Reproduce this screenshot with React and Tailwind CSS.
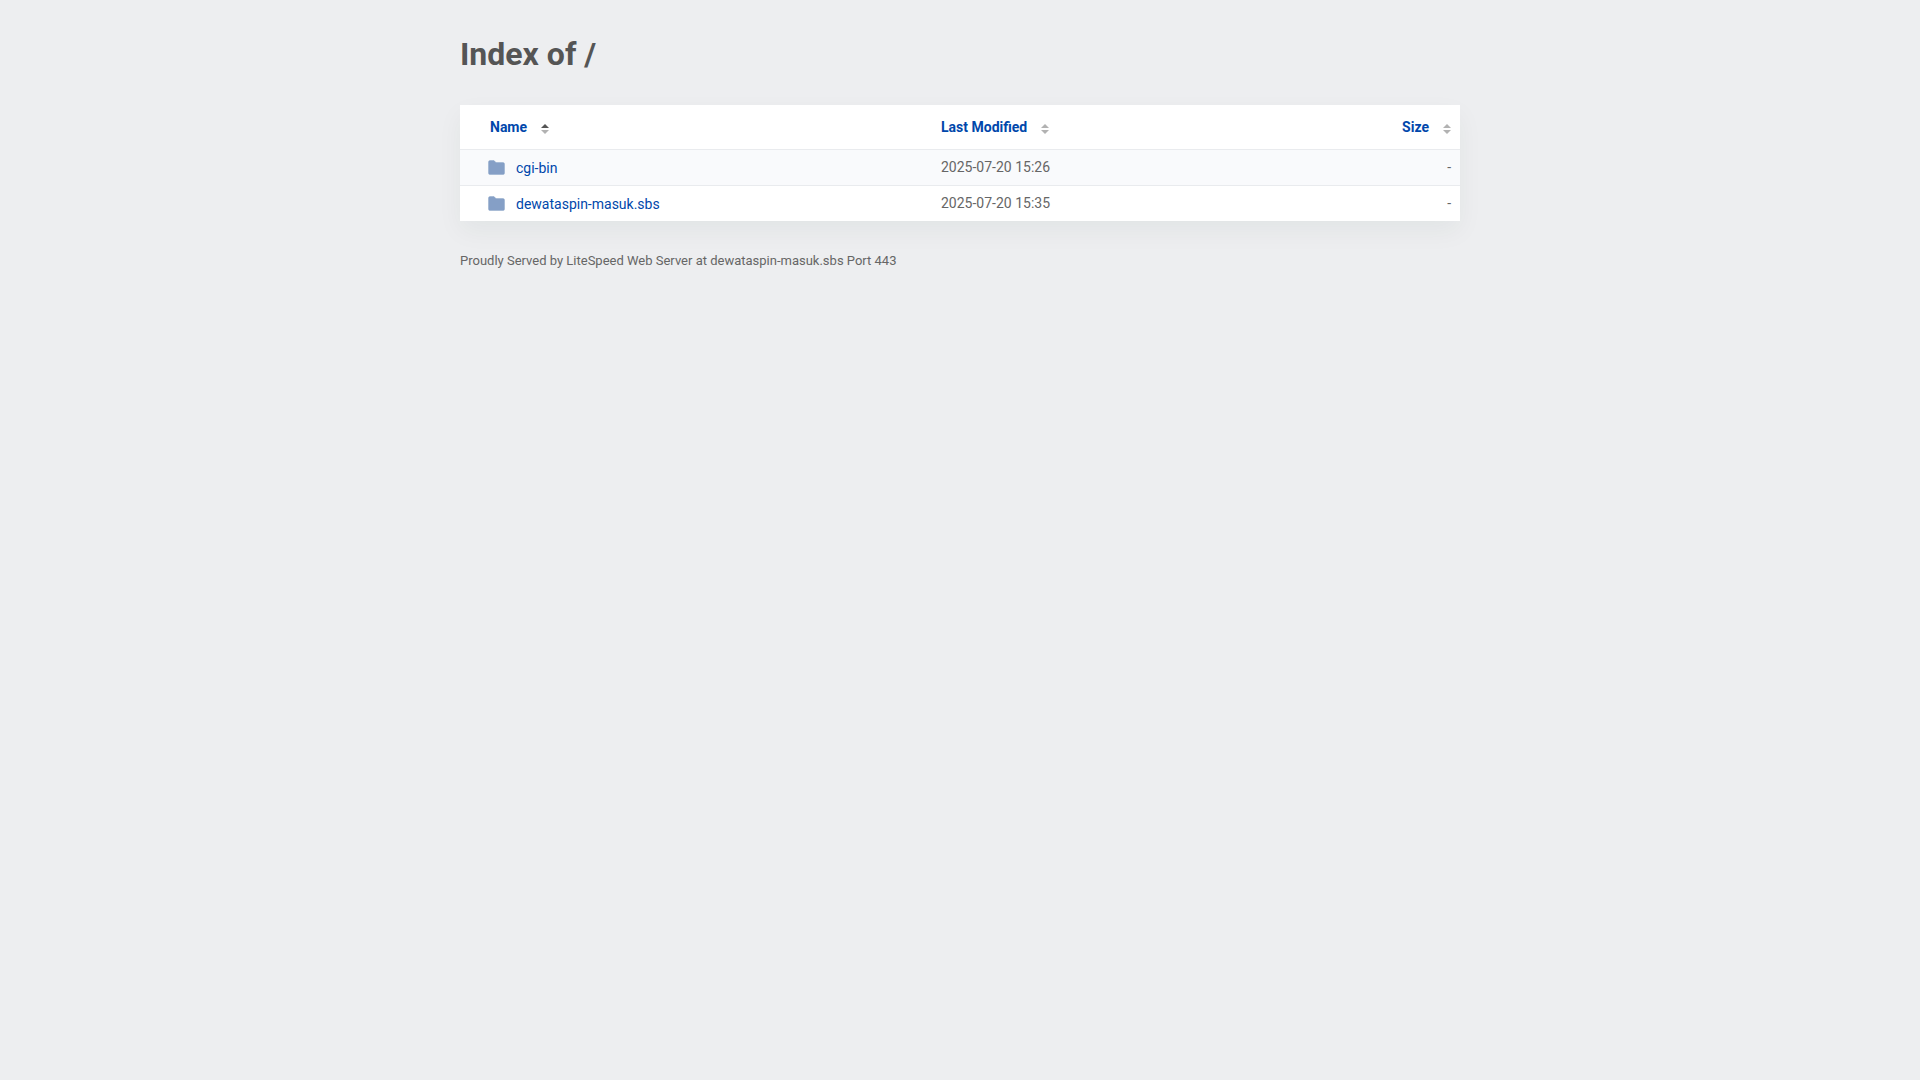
const entries = [
  { name: "cgi-bin", modified: "2025-07-20 15:26", size: "-" },
  { name: "dewataspin-masuk.sbs", modified: "2025-07-20 15:35", size: "-" },
];

function SortIcon({ active }) {
  return (
    <svg aria-hidden="true" viewBox="0 0 8 10" className="mt-1 h-2.5 w-2 shrink-0">
      <path d="M4 0 8 4H0Z" fill={active ? "#555555" : "#b2b2b2"} />
      <path d="M0 6H8L4 10Z" fill="#b2b2b2" />
    </svg>
  );
}

function FolderIcon() {
  return (
    <svg aria-hidden="true" viewBox="0 0 17 15" className="h-[15px] w-[17px] shrink-0">
      <path
        d="M2 0.5H6L8 2.5H15Q16.5 2.5 16.5 4V13Q16.5 14.5 15 14.5H2Q0.5 14.5 0.5 13V2Q0.5 0.5 2 0.5Z"
        fill="#859fc6"
        stroke="#859fc6"
        strokeOpacity="0.4"
      />
    </svg>
  );
}

function SortButton({ label, active }) {
  return (
    <button type="button" className="inline-flex cursor-pointer items-center gap-3.5 align-top font-bold text-[#0047ab]">
      {label}
      <SortIcon active={active} />
    </button>
  );
}

export default function App() {
  return (
    <div className="min-h-screen bg-[#edeef0] px-5 pt-8 font-['Roboto',sans-serif] text-sm text-[#666666]">
      <main className="mx-auto max-w-[1000px]">
        <h1 className="text-[32px] leading-11 font-bold text-[#555555]">Index of /</h1>
        <table className="mt-[29px] w-full table-fixed border-separate border-spacing-0 bg-white text-left leading-5 shadow-[0_10px_24px_0_rgba(0,50,40,0.05)]">
          <thead>
            <tr>
              <th scope="col" aria-sort="ascending" className="w-[47.1%] py-3 pr-2.5 pl-[30px]">
                <SortButton label="Name" active />
              </th>
              <th scope="col" className="px-2.5 py-3">
                <SortButton label="Last Modified" />
              </th>
              <th scope="col" className="w-[15%] py-3 pr-[9px] pl-2.5 text-right">
                <SortButton label="Size" />
              </th>
            </tr>
          </thead>
          <tbody>
            {entries.map((entry) => (
              <tr key={entry.name} className="odd:bg-[#f9fafc]">
                <td className="h-9 border-t border-[#e9ebee] pr-2.5 pl-7">
                  <a href="#" className="flex items-center gap-[11px] text-[#0047ab]">
                    <FolderIcon />
                    {entry.name}
                  </a>
                </td>
                <td className="h-9 border-t border-[#e9ebee] px-2.5 pb-0.5">{entry.modified}</td>
                <td className="h-9 border-t border-[#e9ebee] pr-[9px] pb-0.5 pl-2.5 text-right">{entry.size}</td>
              </tr>
            ))}
          </tbody>
        </table>
        <footer className="mt-7 text-[13px] leading-6">
          Proudly Served by LiteSpeed Web Server at dewataspin-masuk.sbs Port 443
        </footer>
      </main>
    </div>
  );
}
